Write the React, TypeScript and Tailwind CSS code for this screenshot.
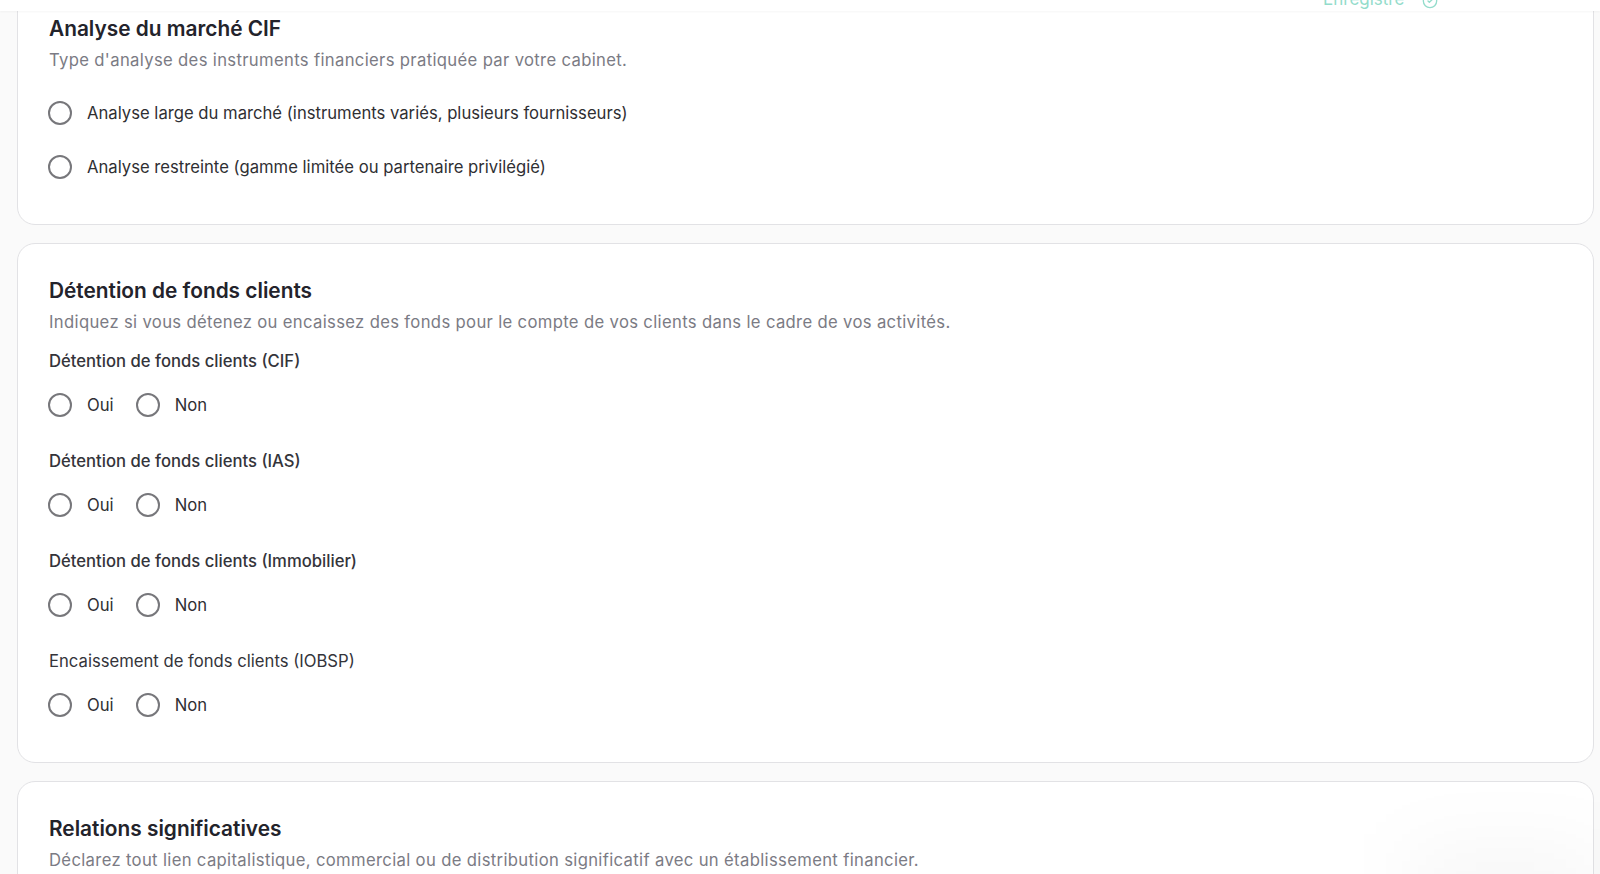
import React from 'react';
import { CircleCheck } from 'lucide-react';

const Radio: React.FC<{ label: string }> = ({ label }) => (
  <label className="flex items-center gap-[15px] h-10 -ml-px">
    <span className="w-6 h-6 rounded-full border-2 border-[#77777b] bg-white shrink-0" />
    <span className="text-[16.67px] leading-6 text-[#2f2f33]">{label}</span>
  </label>
);

const Card: React.FC<{ title: string; description: string; children?: React.ReactNode }> = ({
  title,
  description,
  children,
}) => (
  <section className="bg-white border border-[#e2e2e5] rounded-[18px] pl-[31px] pr-[30px] pt-8 pb-[37px]">
    <h2 className="text-[20.83px] font-semibold text-[#23232b] leading-7 pt-[0.5px]">{title}</h2>
    <p className="mt-[5px] text-[16.67px] leading-6 tracking-[0.02em] text-[#7b7b84]">{description}</p>
    {children}
  </section>
);

const YesNo: React.FC<{ label: string; regular?: boolean }> = ({ label, regular }) => (
  <div>
    <p className={regular ? 'text-[16.67px] leading-6 text-[#34343a] mb-3' : 'text-[16.67px] leading-6 font-medium text-[#34343a] mb-3'}>{label}</p>
    <div className="flex gap-[23px]">
      <Radio label="Oui" />
      <Radio label="Non" />
    </div>
  </div>
);

export default function App() {
  return (
    <div className="relative h-[874px] overflow-hidden bg-[#fafafa] font-['Inter',sans-serif]">
      {/* Sticky save bar, mostly scrolled out */}
      <div className="absolute top-0 left-0 right-0 h-[11px] bg-white shadow-[0_1px_2px_rgba(0,0,0,0.04)] z-10 overflow-hidden">
        <div className="absolute left-[1323px] top-[-13px] flex items-center gap-[18px] text-[17px] leading-6 text-[#93dccb]">
          <span>Enregistré</span>
          <CircleCheck className="w-[16px] h-[16px] mt-[3px]" />
        </div>
      </div>

      <main className="flex flex-col gap-[18px] pl-[17px] pr-[6px] mt-[-19px]">
        <Card title="Analyse du marché CIF" description="Type d'analyse des instruments financiers pratiquée par votre cabinet.">
          <div className="mt-[21.5px] flex flex-col gap-[14px]">
            <Radio label="Analyse large du marché (instruments variés, plusieurs fournisseurs)" />
            <Radio label="Analyse restreinte (gamme limitée ou partenaire privilégié)" />
          </div>
        </Card>

        <Card title="Détention de fonds clients" description="Indiquez si vous détenez ou encaissez des fonds pour le compte de vos clients dans le cadre de vos activités.">
          <div className="mt-[15.5px] flex flex-col gap-6">
            <YesNo label="Détention de fonds clients (CIF)" />
            <YesNo label="Détention de fonds clients (IAS)" />
            <YesNo label="Détention de fonds clients (Immobilier)" />
            <YesNo label="Encaissement de fonds clients (IOBSP)" regular />
          </div>
        </Card>

        <Card title="Relations significatives" description="Déclarez tout lien capitalistique, commercial ou de distribution significatif avec un établissement financier." />
      </main>

      {/* Faint shadow of a floating element below the fold */}
      <div className="absolute right-0 bottom-[-34px] w-[190px] h-[50px] bg-black/5 blur-2xl" />
    </div>
  );
}
